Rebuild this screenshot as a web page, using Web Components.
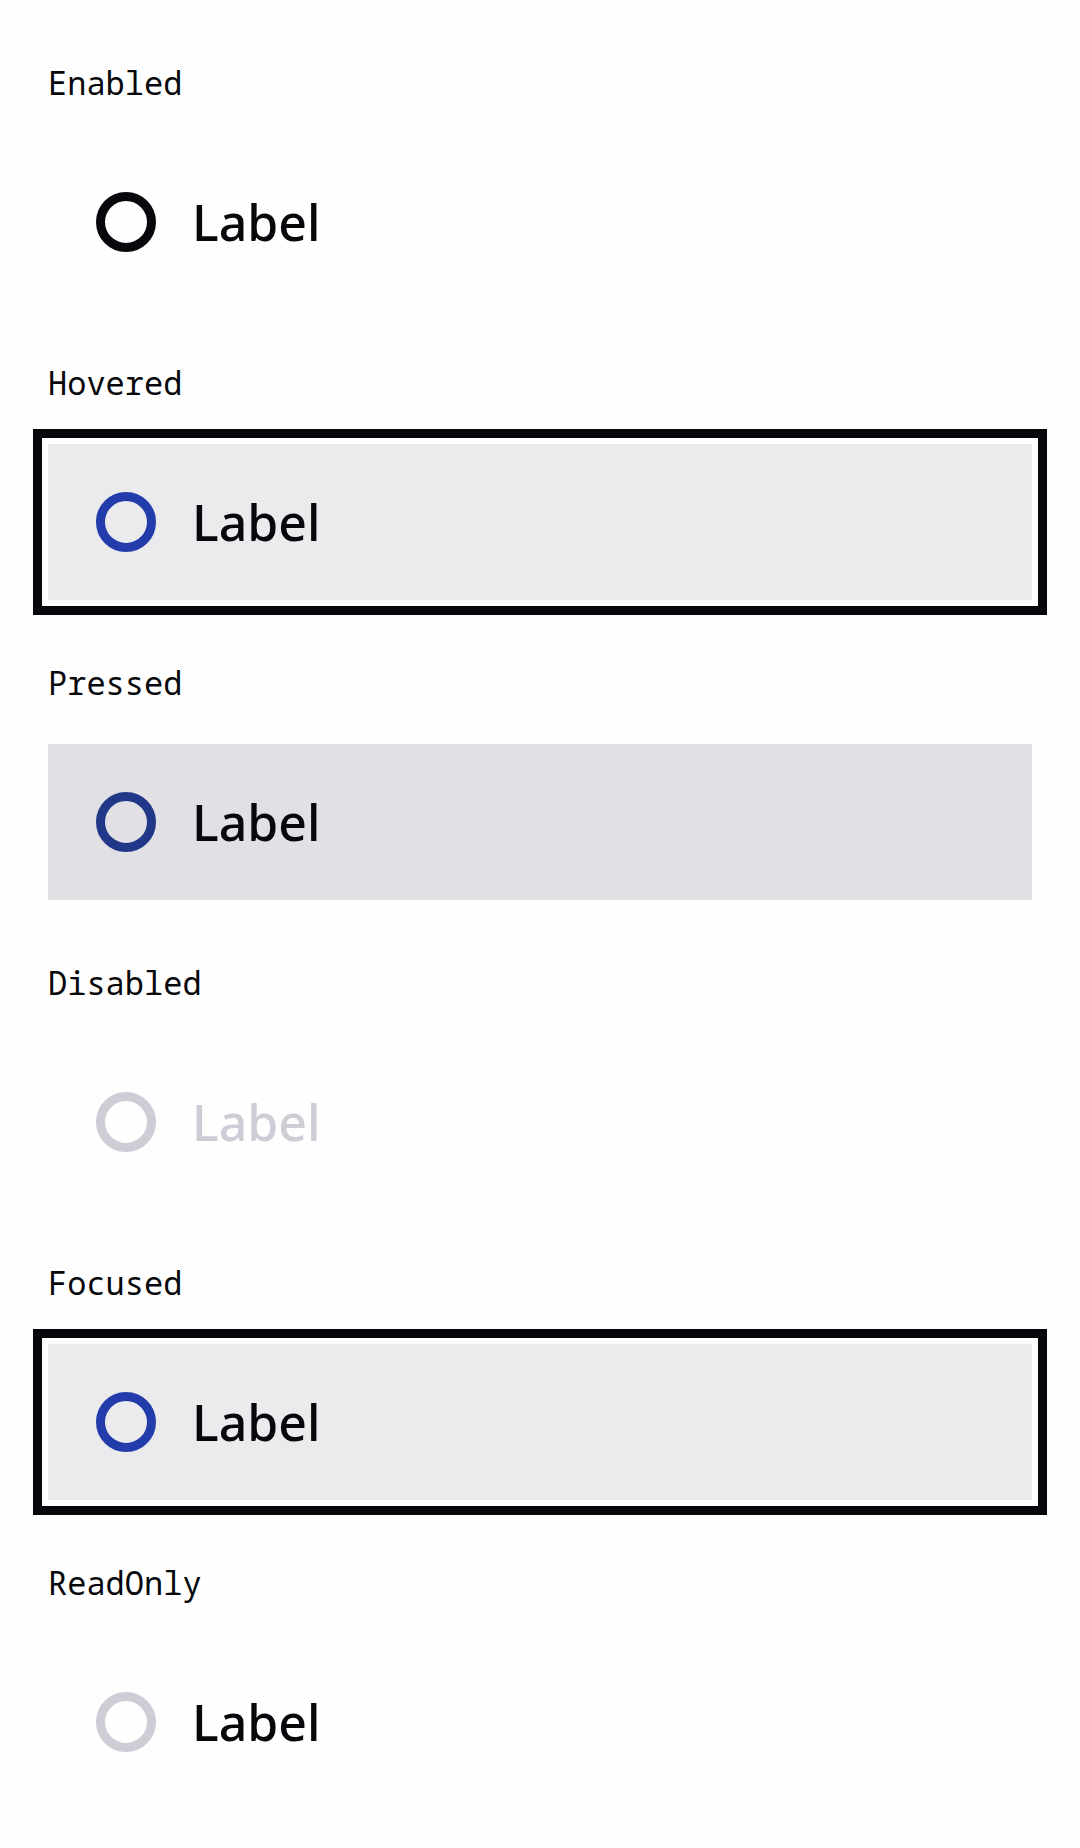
<!DOCTYPE html>
<html lang="en">
<head>
<meta charset="utf-8">
<meta name="viewport" content="width=device-width">
<title>Radio button states</title>
<style>
  body { margin: 0; background: #fefefe; color: #07080c; }
</style>
</head>
<body>
<state-gallery>
  <state-example heading="Enabled"><radio-row>Label</radio-row></state-example>
  <state-example heading="Hovered"><radio-row state="hovered">Label</radio-row></state-example>
  <state-example heading="Pressed"><radio-row state="pressed">Label</radio-row></state-example>
  <state-example heading="Disabled"><radio-row state="disabled">Label</radio-row></state-example>
  <state-example heading="Focused"><radio-row state="focused">Label</radio-row></state-example>
  <state-example heading="ReadOnly"><radio-row state="readonly">Label</radio-row></state-example>
</state-gallery>

<template id="gallery">
  <style>
    :host { display: block; }
    main { display: flex; flex-direction: column; gap: 60px; padding: 60px 48px 48px; }
  </style>
  <main><slot></slot></main>
</template>

<template id="example">
  <style>
    :host { display: block; }
    section { display: flex; flex-direction: column; gap: 38px; }
    h2 { margin: 0; font: 400 32px/46px "Noto Sans Mono", "Liberation Mono", monospace; }
  </style>
  <section><h2></h2><slot></slot></section>
</template>

<template id="row">
  <style>
    :host {
      display: block;
      --ring: #07080c;
      --text: #07080c;
      --fill: transparent;
    }
    :host([state="hovered"]), :host([state="focused"]) {
      --ring: #223cab;
      --fill: #ebebed;
      outline: 9px solid #07080c;
      outline-offset: 6px;
      box-shadow: 0 0 0 6px #ffffff;
    }
    :host([state="pressed"]) { --ring: #213888; --fill: #e1e0e5; }
    :host([state="disabled"]) { --ring: #cdcdd6; --text: #cdcdd6; }
    :host([state="readonly"]) { --ring: #cdcdd6; }
    label {
      display: flex;
      align-items: center;
      gap: 36px;
      padding: 48px;
      background: var(--fill);
      color: var(--text);
      font: 500 50px/60px "Noto Sans", sans-serif;
    }
    input {
      appearance: none;
      box-sizing: border-box;
      flex: none;
      width: 60px;
      height: 60px;
      margin: 0;
      border: 9px solid var(--ring);
      border-radius: 50%;
      background: transparent;
      outline: none;
    }
  </style>
  <label><input type="radio"><span><slot></slot></span></label>
</template>

<script>
  class TemplateElement extends HTMLElement {
    constructor() {
      super();
      const template = document.getElementById(this.constructor.template);
      this.attachShadow({ mode: "open" }).append(template.content.cloneNode(true));
    }
  }

  class StateGallery extends TemplateElement {
    static template = "gallery";
  }

  class StateExample extends TemplateElement {
    static template = "example";
    connectedCallback() {
      this.shadowRoot.querySelector("h2").textContent = this.getAttribute("heading");
    }
  }

  class RadioRow extends TemplateElement {
    static template = "row";
    connectedCallback() {
      const input = this.shadowRoot.querySelector("input");
      const state = this.getAttribute("state");
      input.disabled = state === "disabled";
      if (state === "readonly") {
        input.addEventListener("click", event => event.preventDefault());
      }
    }
  }

  customElements.define("state-gallery", StateGallery);
  customElements.define("state-example", StateExample);
  customElements.define("radio-row", RadioRow);
</script>
</body>
</html>
